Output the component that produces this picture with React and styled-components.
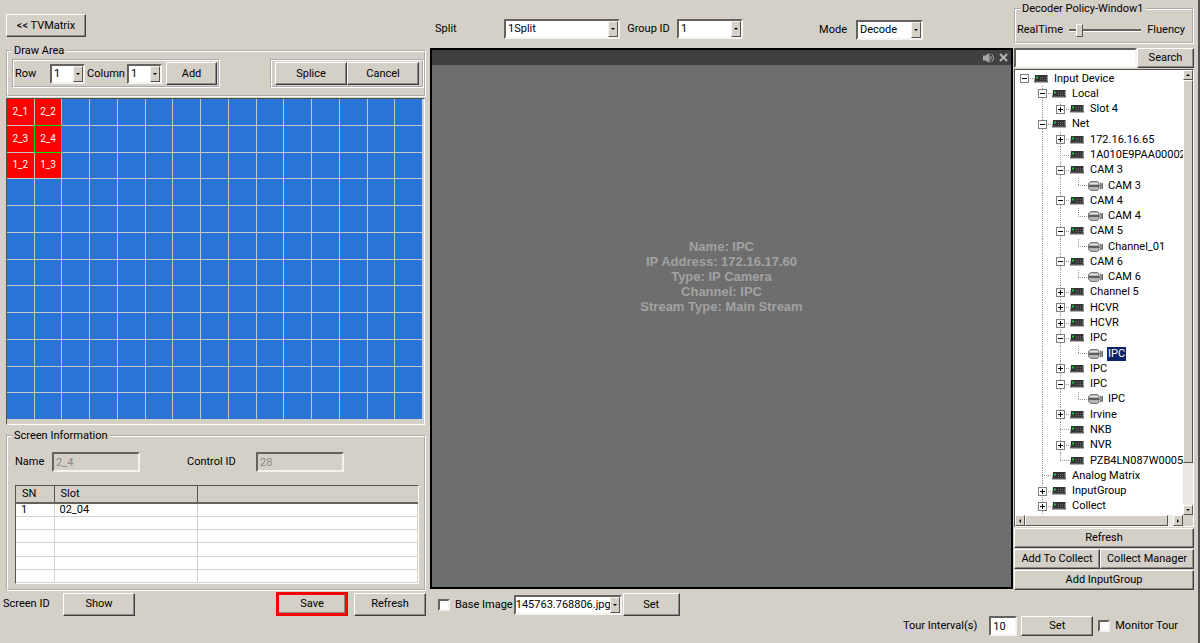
import React from 'react';
import styled, { createGlobalStyle } from 'styled-components';

const redCells = {
  0: '2_1',
  1: '2_2',
  15: '2_3',
  16: '2_4',
  30: '1_2',
  31: '1_3',
};
const SELECTED_CELL = 16;
const CELLS = 15 * 12;

// line: how far the dotted line runs down beside a node
const tree = [
  { depth: 0, toggle: '-', name: 'Input Device', line: 'none' },
  { depth: 1, toggle: '-', name: 'Local', line: 'full' },
  { depth: 2, toggle: '+', name: 'Slot 4', line: 'end' },
  { depth: 1, toggle: '-', name: 'Net', line: 'full' },
  { depth: 2, toggle: '+', name: '172.16.16.65', line: 'full' },
  { depth: 2, name: '1A010E9PAA00002', line: 'full' },
  { depth: 2, toggle: '-', name: 'CAM 3', line: 'full' },
  { depth: 3, name: 'CAM 3', line: 'end', camera: true },
  { depth: 2, toggle: '-', name: 'CAM 4', line: 'full' },
  { depth: 3, name: 'CAM 4', line: 'end', camera: true },
  { depth: 2, toggle: '-', name: 'CAM 5', line: 'full' },
  { depth: 3, name: 'Channel_01', line: 'end', camera: true },
  { depth: 2, toggle: '-', name: 'CAM 6', line: 'full' },
  { depth: 3, name: 'CAM 6', line: 'end', camera: true },
  { depth: 2, toggle: '+', name: 'Channel 5', line: 'full' },
  { depth: 2, toggle: '+', name: 'HCVR', line: 'full' },
  { depth: 2, toggle: '+', name: 'HCVR', line: 'full' },
  { depth: 2, toggle: '-', name: 'IPC', line: 'full' },
  { depth: 3, name: 'IPC', line: 'end', camera: true, selected: true },
  { depth: 2, toggle: '+', name: 'IPC', line: 'full' },
  { depth: 2, toggle: '-', name: 'IPC', line: 'full' },
  { depth: 3, name: 'IPC', line: 'end', camera: true },
  { depth: 2, toggle: '+', name: 'Irvine', line: 'full' },
  { depth: 2, name: 'NKB', line: 'full' },
  { depth: 2, toggle: '+', name: 'NVR', line: 'full' },
  { depth: 2, name: 'PZB4LN087W00058', line: 'end' },
  { depth: 1, name: 'Analog Matrix', line: 'full' },
  { depth: 1, toggle: '+', name: 'InputGroup', line: 'full' },
  { depth: 1, toggle: '+', name: 'Collect', line: 'full' },
];

const DeviceIcon = () => (
  <svg width="14" height="8" viewBox="0 0 14 8" aria-hidden="true">
    <path d="M1 0h12.500v6H.5z" fill="#333" />
    <path d="M0 6h14v1.500H0z" fill="#5c5c5c" />
    <path
      d="M6 2.500h7M6 4.500h7"
      stroke="#6a6a6a"
      strokeDasharray="1 1"
    />
    <path d="M2 1.500h2v2H2z" fill="#1fc43a" />
  </svg>
);

const CameraIcon = () => (
  <svg width="16" height="10" viewBox="0 0 16 10" aria-hidden="true">
    <path
      d="M3 .5h6.500L11 2v6L9.500 9.500H3L.5 7.500v-5z"
      fill="#b4b4b4"
      stroke="#777"
    />
    <path d="M2 2.500h8" stroke="#e6e6e6" />
    <path d="M1 5h10" stroke="#5f5f5f" strokeWidth="2" />
    <path d="M11.500 5l3-3v6z" fill="#999" stroke="#666" />
    <path d="M12.500 1.500v7" stroke="#888" />
  </svg>
);

const SpeakerIcon = () => (
  <svg width="12" height="10" viewBox="0 0 12 10" aria-hidden="true">
    <path d="M0 2.500h2.500L6.500 0v10L2.500 7.500H0z" fill="#a6a6a6" />
    <path
      d="M7.500 3q1.500 2 0 4M8.500 1q4 4 0 8"
      fill="none"
      stroke="#a6a6a6"
    />
  </svg>
);

const CloseIcon = () => (
  <svg width="9" height="9" viewBox="0 0 9 9" aria-hidden="true">
    <path d="M1 1l7 7M8 1L1 8" stroke="#b4b4b4" strokeWidth="2" />
  </svg>
);

const Arrow = ({ dir }) => {
  const shapes = {
    up: 'M0 3h4L2 1z',
    down: 'M0 1h4L2 3z',
    left: 'M3 0v4L1 2z',
    right: 'M1 0v4l2-2z',
  };
  return (
    <svg width="4" height="4" viewBox="0 0 4 4" aria-hidden="true">
      <path d={shapes[dir]} fill="#000" />
    </svg>
  );
};

const Select = ({ id, label, value, width, tight }) => (
  <SelectBox $width={width} $tight={tight}>
    <select id={id} aria-label={label} defaultValue={value}>
      <option>{value}</option>
    </select>
    <span>
      <Arrow dir="down" />
    </span>
  </SelectBox>
);

const TreeRow = ({ item, insideNet }) => {
  const { depth, toggle, name, line, camera, selected } = item;
  const parents = Array.from({ length: depth }, (_, i) => i);
  return (
    <Row role="treeitem" aria-level={depth + 1} aria-selected={!!selected}>
      {parents.map((i) => (
        <Branch key={i} $line={i === 1 || (i === 2 && insideNet) ? 'full' : 'none'} />
      ))}
      <Branch $line={line} $elbow>
        {toggle && <Toggle $plus={toggle === '+'} />}
      </Branch>
      <IconSlot>{camera ? <CameraIcon /> : <DeviceIcon />}</IconSlot>
      <NodeName $selected={selected}>{name}</NodeName>
    </Row>
  );
};

const DrawPanel = () => (
  <LeftColumn>
    <LeftContent>
      <Button $width="80px">&lt;&lt; TVMatrix</Button>
      <Group $top="7px">
        <legend>Draw Area</legend>
        <DrawTools>
          <ToolBox>
            <Label htmlFor="row" $width="35px">
              Row
            </Label>
            <Select id="row" value="1" width="35px" />
            <Label htmlFor="column" $width="42px" $center>
              Column
            </Label>
            <Select id="column" value="1" width="35px" />
            <AddSlot>
              <Button $width="51px">Add</Button>
            </AddSlot>
          </ToolBox>
          <ToolBox>
            <Button $width="72px">Splice</Button>
            <Button $width="72px">Cancel</Button>
          </ToolBox>
        </DrawTools>
      </Group>
      <ScreenWall>
        {Array.from({ length: CELLS }, (_, i) => (
          <Cell key={i} $red={!!redCells[i]} $selected={i === SELECTED_CELL}>
            {redCells[i]}
          </Cell>
        ))}
      </ScreenWall>
      <Group $top="4px">
        <legend>Screen Information</legend>
        <Info>
          <Fields>
            <Label htmlFor="name" $width="37px">
              Name
            </Label>
            <TextBox id="name" defaultValue="2_4" disabled $width="88px" />
            <ControlLabel htmlFor="control">Control ID</ControlLabel>
            <TextBox id="control" defaultValue="28" disabled $width="88px" />
          </Fields>
          <TableFrame>
            <SlotTable>
              <thead>
                <tr>
                  <th>SN</th>
                  <th>Slot</th>
                  <th aria-label="Details"></th>
                </tr>
              </thead>
              <tbody>
                <tr>
                  <td>1</td>
                  <td>02_04</td>
                  <td></td>
                </tr>
                {[1, 2, 3, 4, 5].map((n) => (
                  <tr key={n}>
                    <td></td>
                    <td></td>
                    <td></td>
                  </tr>
                ))}
              </tbody>
            </SlotTable>
          </TableFrame>
        </Info>
      </Group>
    </LeftContent>
    <LeftFooter>
      <Label as="span" $width="60px">
        Screen ID
      </Label>
      <Button $width="72px">Show</Button>
      <FooterRight>
        <SaveFrame>
          <Button $width="68px" $short>
            Save
          </Button>
        </SaveFrame>
        <Button $width="72px">Refresh</Button>
      </FooterRight>
    </LeftFooter>
  </LeftColumn>
);

const VideoPanel = () => (
  <CenterColumn>
    <TopBar>
      <Label htmlFor="split" $width="69px">
        Split
      </Label>
      <Select id="split" value="1Split" width="116px" />
      <Label htmlFor="group" $width="57px" $center>
        Group ID
      </Label>
      <Select id="group" value="1" width="66px" />
      <ModeField>
        <Label htmlFor="mode">Mode</Label>
        <Select id="mode" value="Decode" width="67px" />
      </ModeField>
    </TopBar>
    <Video>
      <VideoHeader>
        <IconButton aria-label="Sound">
          <SpeakerIcon />
        </IconButton>
        <IconButton aria-label="Close">
          <CloseIcon />
        </IconButton>
      </VideoHeader>
      <VideoText>
        <p>Name: IPC</p>
        <p>IP Address: 172.16.17.60</p>
        <p>Type: IP Camera</p>
        <p>Channel: IPC</p>
        <p>Stream Type: Main Stream</p>
      </VideoText>
    </Video>
    <BottomBar>
      <CheckLabel>
        <Check type="checkbox" />
        Base Image
      </CheckLabel>
      <Select
        label="Base image file"
        value="145763.768806.jpg"
        width="108px"
        tight
      />
      <Button $width="57px">Set</Button>
    </BottomBar>
  </CenterColumn>
);

const DevicePanel = () => (
  <RightColumn>
    <Group $top="0">
      <legend>Decoder Policy-Window1</legend>
      <Policy>
        <label htmlFor="policy">RealTime</label>
        <Slider id="policy" type="range" min="0" max="10" defaultValue="1" />
        <span>Fluency</span>
      </Policy>
    </Group>
    <SearchBar>
      <TextBox aria-label="Search devices" $fill />
      <Button $width="57px" $short>
        Search
      </Button>
    </SearchBar>
    <TreeFrame>
      <Tree role="tree">
        {tree.map((item, i) => (
          <TreeRow key={i} item={item} insideNet={i > 3 && i < 26} />
        ))}
      </Tree>
      <ScrollBar $vertical>
        <ScrollButton aria-label="Scroll up">
          <Arrow dir="up" />
        </ScrollButton>
        <Thumb $size={380} />
        <Track $size={42} />
        <ScrollButton aria-label="Scroll down">
          <Arrow dir="down" />
        </ScrollButton>
      </ScrollBar>
      <ScrollBar>
        <ScrollButton aria-label="Scroll left">
          <Arrow dir="left" />
        </ScrollButton>
        <Thumb $size={140} />
        <Track $size={5} />
        <ScrollButton aria-label="Scroll right">
          <Arrow dir="right" />
        </ScrollButton>
      </ScrollBar>
    </TreeFrame>
    <Actions>
      <Button $short>Refresh</Button>
      <SplitRow>
        <Button $short>Add To Collect</Button>
        <Button $short>Collect Manager</Button>
      </SplitRow>
      <Button $short>Add InputGroup</Button>
    </Actions>
  </RightColumn>
);

const App = () => {
  return (
    <Page>
      <GlobalStyle />
      <Columns>
        <DrawPanel />
        <VideoPanel />
        <DevicePanel />
      </Columns>
      <TourBar>
        <label htmlFor="tour">Tour Interval(s)</label>
        <TourInput>
          <TextBox id="tour" defaultValue="10" $width="28px" />
          <Button $width="72px" $short>
            Set
          </Button>
        </TourInput>
        <CheckLabel>
          <Check type="checkbox" />
          Monitor Tour
        </CheckLabel>
      </TourBar>
    </Page>
  );
};

const GlobalStyle = createGlobalStyle`
  * {
    box-sizing: border-box;
  }
  body {
    margin: 0;
    background: #d4cfc7;
    color: #000;
    font: 11px/14px Roboto, 'Liberation Sans', sans-serif;
  }
  button, input, select {
    font: inherit;
    color: inherit;
    margin: 0;
  }
`;

const Page = styled.main`
  min-height: 100vh;
  border-right: 2px solid #55534f;
  overflow: hidden;
`;

const Columns = styled.div`
  display: grid;
  grid-template-columns: 430px minmax(0, 1fr) 185px;
`;

const Button = styled.button`
  width: ${(props) => props.$width || 'auto'};
  height: ${(props) => (props.$short ? '20px' : '23px')};
  padding: 0;
  flex-shrink: 0;
  white-space: nowrap;
  background: #d4cfc7;
  border: 1px solid;
  border-color: #fff #404040 #404040 #fff;
  box-shadow: inset -1px -1px #8d8a85;
`;

const Label = styled.label`
  width: ${(props) => props.$width || 'auto'};
  text-align: ${(props) => (props.$center ? 'center' : 'left')};
  flex-shrink: 0;
`;

const SelectBox = styled.span`
  display: flex;
  flex-shrink: 0;
  width: ${(props) => props.$width};
  height: 20px;
  background: #fff;
  border: 2px solid;
  border-color: #66635f #f5f3ef #f5f3ef #66635f;

  select {
    appearance: none;
    flex: 1;
    min-width: 0;
    padding: 0 0 0 ${(props) => (props.$tight ? '0' : '2px')};
    border: 0;
    background: transparent;
  }
  span {
    display: grid;
    place-items: center;
    width: 10px;
    flex-shrink: 0;
    background: #d4cfc7;
    border: 1px solid;
    border-color: #f5f3ef #55534f #55534f #f5f3ef;
  }
`;

const TextBox = styled.input`
  width: ${(props) => props.$width || 'auto'};
  flex: ${(props) => (props.$fill ? '1' : 'none')};
  min-width: 0;
  height: 20px;
  padding: 0 2px;
  background: #fff;
  border: 2px solid;
  border-color: #66635f #f5f3ef #f5f3ef #66635f;

  &:disabled {
    background: #d4cfc7;
    color: #8d8a85;
  }
`;

const Group = styled.fieldset`
  min-width: 0;
  margin: ${(props) => props.$top} 0 0;
  padding: 0;
  border: 2px groove #fff;

  legend {
    margin-left: 4px;
    padding: 0 2px;
  }
`;

const LeftColumn = styled.section`
  padding: 14px 4px 0 3px;
`;

const LeftContent = styled.div`
  padding-left: 3px;
`;

const DrawTools = styled.div`
  display: flex;
  justify-content: space-between;
  padding: 1px 0 7px 4px;
`;

const ToolBox = styled.div`
  display: flex;
  align-items: center;
  height: 29px;
  padding: 0 1px;
  border: 2px groove #fff;

  &:last-child {
    padding: 0 3px;
  }
`;

const AddSlot = styled.div`
  display: flex;
  padding-left: 4px;
`;

const ScreenWall = styled.div`
  display: grid;
  grid-template-columns: repeat(15, 1fr);
  grid-template-rows: repeat(12, 1fr);
  gap: 1px;
  min-height: 327px;
  padding: 0 2px 5px 0;
  margin: 1px 1px 0 0;
  border: 1px solid;
  border-color: #55534f #fff #fff #55534f;
  background: linear-gradient(#c4c6c8, #c4c6c8) content-box no-repeat;
`;

const Cell = styled.div`
  display: grid;
  place-items: center;
  font-size: 10px;
  color: #fff;
  background: ${(props) => (props.$red ? '#ff0000' : '#2874d7')};
  z-index: ${(props) => (props.$selected ? 1 : 'auto')};
  outline: ${(props) => (props.$selected ? '1px solid #00e000' : 'none')};
`;

const Info = styled.div`
  padding: 9px 5px 5px 7px;
`;

const Fields = styled.div`
  display: flex;
  align-items: center;
  padding-bottom: 13px;
`;

const ControlLabel = styled.label`
  width: 116px;
  padding-left: 47px;
`;

const TableFrame = styled.div`
  height: 99px;
  border: 1px solid;
  border-color: #55534f #fff #fff #55534f;
  background: #fff;
`;

const SlotTable = styled.table`
  width: 100%;
  height: 97px;
  table-layout: fixed;
  border-collapse: collapse;
  line-height: 12px;

  th {
    height: 17px;
    padding: 0 6px;
    text-align: left;
    font-weight: normal;
    background: #d4cfc7;
    border-right: 1px solid #55534f;
    border-bottom: 2px solid #66635f;
  }
  th:first-child {
    width: 38px;
  }
  th:nth-child(2) {
    width: 143px;
  }
  th:last-child {
    border-right: 0;
  }
  td {
    height: 13px;
    padding: 0 5px;
    border-right: 1px solid #d4d1c9;
    border-bottom: 1px solid #d4d1c9;
  }
`;

const LeftFooter = styled.div`
  display: flex;
  align-items: center;
  height: 24px;
  margin-top: 1px;
`;

const FooterRight = styled.div`
  display: flex;
  align-items: center;
  gap: 6px;
  margin-left: auto;
`;

const SaveFrame = styled.div`
  display: flex;
  border: 2px solid #ff0000;
  outline: 1px solid #ff0000;
  outline-offset: -3px;
`;

const CenterColumn = styled.section`
  display: flex;
  flex-direction: column;
`;

const TopBar = styled.div`
  display: flex;
  align-items: center;
  height: 48px;
  padding: 10px 0 0 5px;
`;

const ModeField = styled.div`
  display: flex;
  align-items: center;
  gap: 9px;
  margin: 2px 0 0 auto;
  padding-right: 90px;
`;

const Video = styled.div`
  display: flex;
  flex-direction: column;
  flex: 1;
  border: 2px solid #000;
  background: #6e6e6e;
`;

const VideoHeader = styled.div`
  display: flex;
  align-items: center;
  justify-content: flex-end;
  gap: 4px;
  height: 15px;
  padding-right: 3px;
  background: #404040;
`;

const IconButton = styled.button`
  display: flex;
  padding: 0;
  border: 0;
  background: none;
`;

const VideoText = styled.div`
  margin: auto;
  padding-bottom: 99px;
  text-align: center;
  color: #a2a2a2;
  font: bold 13px/15px 'Liberation Sans', sans-serif;

  p {
    margin: 0;
  }
`;

const BottomBar = styled.div`
  display: flex;
  align-items: center;
  gap: 1px;
  height: 27px;
  padding: 4px 0 0 8px;
`;

const CheckLabel = styled.label`
  display: flex;
  align-items: center;
  gap: 5px;
  white-space: nowrap;
`;

const Check = styled.input`
  appearance: none;
  width: 12px;
  height: 12px;
  background: #fff;
  border: 2px solid;
  border-color: #66635f #f5f3ef #f5f3ef #66635f;
`;

const RightColumn = styled.section`
  padding: 2px 4px 0 1px;
`;

const Policy = styled.div`
  display: flex;
  align-items: center;
  justify-content: space-between;
  padding: 7px 7px 5px 1px;
`;

const Slider = styled.input`
  appearance: none;
  width: 72px;
  height: 14px;
  background: transparent;

  &::-webkit-slider-runnable-track {
    height: 3px;
    background: #66635f;
    border-bottom: 1px solid #fff;
  }
  &::-webkit-slider-thumb {
    appearance: none;
    width: 7px;
    height: 13px;
    margin-top: -5px;
    background: #d4cfc7;
    border: 1px solid;
    border-color: #fff #55534f #55534f #fff;
  }
`;

const SearchBar = styled.div`
  display: flex;
  margin-top: 4px;
`;

const TreeFrame = styled.div`
  display: grid;
  grid-template-columns: minmax(0, 1fr) 10px;
  grid-template-rows: 445px 11px;
  margin-top: 1px;
  border: 1px solid;
  border-color: #55534f #fff #fff #55534f;
  background: #d4cfc7;
`;

const Tree = styled.div`
  display: grid;
  grid-auto-rows: 1fr;
  padding: 1px 0;
  overflow: hidden;
  background: #fff;
`;

const Row = styled.div`
  display: flex;
  align-items: center;
  white-space: nowrap;
`;

const dots = 'repeating-linear-gradient(#999 0 1px, transparent 1px 2px)';
const elbow = 'repeating-linear-gradient(90deg, #999 0 1px, transparent 1px 2px)';

const Branch = styled.span`
  display: grid;
  place-items: center;
  align-self: stretch;
  width: 18px;
  flex-shrink: 0;
  background-repeat: no-repeat;
  background-image: ${dots}, ${(props) => (props.$elbow ? elbow : 'none')};
  background-position: 9px 0, 9px 50%;
  background-size: ${(props) =>
      ({ full: '1px 100%', end: '1px 50%', none: '0 0' })[props.$line]},
    9px 1px;
`;

const Toggle = styled.span`
  width: 9px;
  height: 9px;
  border: 1px solid #808080;
  background: linear-gradient(#000, #000) center / 5px 1px no-repeat,
    linear-gradient(#000, #000) center / ${(props) => (props.$plus ? '1px 5px' : '0 0')}
      no-repeat,
    #fff;
`;

const IconSlot = styled.span`
  display: flex;
  width: 18px;
  margin-right: 2px;
  padding-left: 1px;
  flex-shrink: 0;
`;

const NodeName = styled.span`
  padding: 0 1px;
  background: ${(props) => (props.$selected ? '#0a246a' : 'transparent')};
  color: ${(props) => (props.$selected ? '#fff' : 'inherit')};
`;

const ScrollBar = styled.div`
  display: flex;
  flex-direction: ${(props) => (props.$vertical ? 'column' : 'row')};
`;

const ScrollButton = styled.button`
  display: grid;
  place-items: center;
  flex: 0 0 10px;
  padding: 0;
  min-height: 10px;
  background: #d4cfc7;
  border: 1px solid;
  border-color: #fff #55534f #55534f #fff;
`;

const Thumb = styled.div`
  flex: ${(props) => props.$size};
  background: #d4cfc7;
  border: 1px solid;
  border-color: #fff #55534f #55534f #fff;
`;

const Track = styled.div`
  flex: ${(props) => props.$size};
  background: #eae7e3;
`;

const Actions = styled.div`
  display: grid;
  gap: 1px;
  margin-top: 1px;
`;

const SplitRow = styled.div`
  display: grid;
  grid-template-columns: 86fr 94fr;
`;

const TourBar = styled.div`
  display: flex;
  align-items: center;
  justify-content: flex-end;
  padding-right: 20px;
`;

const TourInput = styled.div`
  display: flex;
  gap: 4px;
  padding: 0 5px 0 12px;
`;

export default App;
